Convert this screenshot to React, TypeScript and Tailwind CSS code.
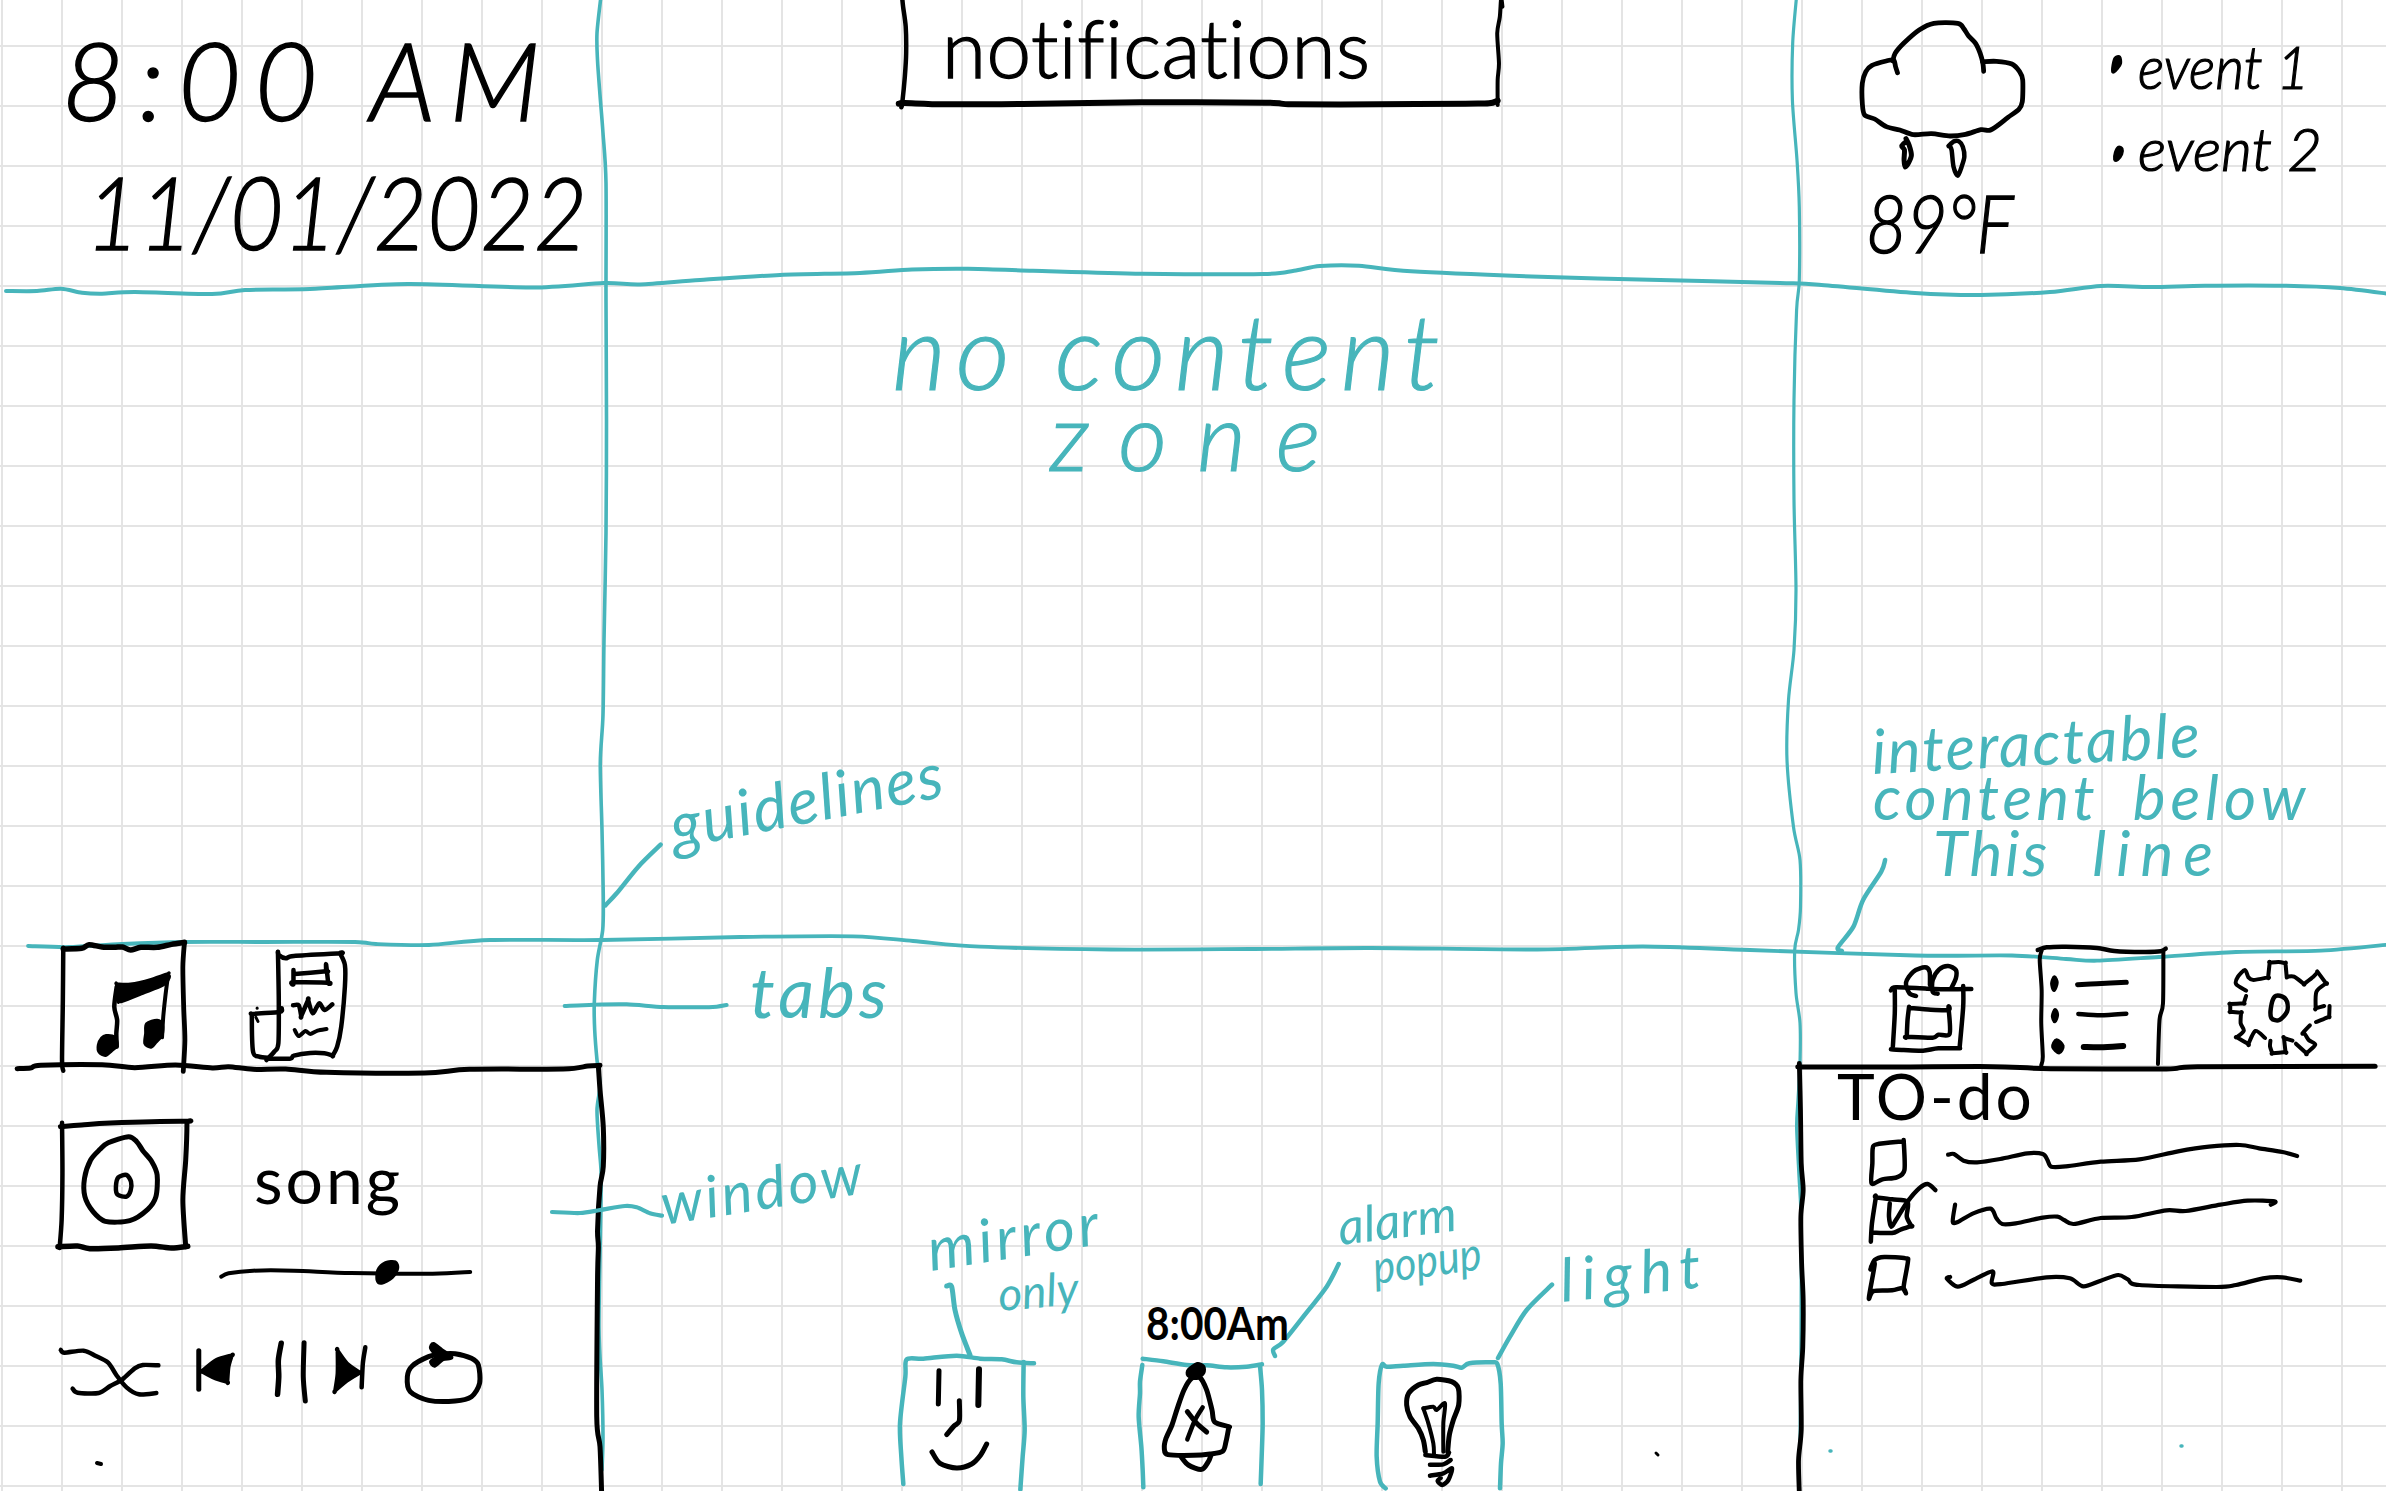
import React from "react";

type Sheet = { x: number; y: number; kx: number; ky: number };

// Each drawing sheet has its own origin and its own units per pixel.
const SHEETS: Record<string, Sheet> = {
  page: { x: 0, y: 0, kx: 1, ky: 1 },
  clock: { x: 0, y: 0, kx: 2.45, ky: 3 },
  notice: { x: 860, y: 0, kx: 2.3059, ky: 3 },
  weather: { x: 1780, y: 0, kx: 2.5875, ky: 3 },
  music: { x: 0, y: 900, kx: 2.45, ky: 3 },
  player: { x: 0, y: 1230, kx: 2.45, ky: 3 },
  notes: { x: 560, y: 730, kx: 3, ky: 3 },
  hint: { x: 1780, y: 700, kx: 2.5875, ky: 3 },
  todo: { x: 1780, y: 930, kx: 2.5875, ky: 3 },
  mirror: { x: 880, y: 1190, kx: 3, ky: 3 },
  light: { x: 1280, y: 1190, kx: 3, ky: 3 },
  win: { x: 540, y: 1130, kx: 3, ky: 3 },
};

const TEAL = "#47b5bb";

// Turns a list of points into a smooth pen stroke (Catmull-Rom to Bezier).
function curve(points: string, closed = false) {
  const p = points.trim().split(/\s+/).map((s) => s.split(",").map(Number));
  const n = p.length;
  const at = (i: number) => (closed ? p[(i + n) % n] : p[Math.max(0, Math.min(n - 1, i))]);
  let d = `M${p[0][0]} ${p[0][1]}`;
  for (let i = 0; i < (closed ? n : n - 1); i++) {
    const [a, b, c, e] = [at(i - 1), at(i), at(i + 1), at(i + 2)];
    const k = 7;
    d += `C${b[0] + (c[0] - a[0]) / k} ${b[1] + (c[1] - a[1]) / k} ${c[0] - (e[0] - b[0]) / k} ${c[1] - (e[1] - b[1]) / k} ${c[0]} ${c[1]}`;
  }
  return d + (closed ? "Z" : "");
}

function Pen({ p, w = 4.5, c = "#000", closed, fill }: { p: string; w?: number; c?: string; closed?: boolean; fill?: boolean }) {
  return (
    <path
      d={curve(p, closed)}
      fill={fill ? c : "none"}
      stroke={c}
      strokeWidth={w}
      strokeLinecap="round"
      strokeLinejoin="round"
      vectorEffect="non-scaling-stroke"
    />
  );
}

function Doodle({ sheet, x, y, w, h, className = "", children }: { sheet: string; x: number; y: number; w: number; h: number; className?: string; children: React.ReactNode }) {
  const s = SHEETS[sheet];
  return (
    <svg
      width={w}
      height={h}
      viewBox={`${(x - s.x) * s.kx} ${(y - s.y) * s.ky} ${w * s.kx} ${h * s.ky}`}
      preserveAspectRatio="none"
      className={`block shrink-0 overflow-visible ${className}`}
    >
      {children}
    </svg>
  );
}

function Layer({ sheet, children }: { sheet: string; children: React.ReactNode }) {
  const s = SHEETS[sheet];
  return <g transform={`translate(${s.x} ${s.y}) scale(${1 / s.kx} ${1 / s.ky})`}>{children}</g>;
}

function Clock() {
  return (
    <section className="flex flex-col pt-[25px] [-webkit-text-stroke:1.4px]">
      <time className="ml-[62px] h-[108px] text-[108px] leading-none font-light tracking-[14px] whitespace-nowrap italic">8:00 AM</time>
      <time className="mt-[28px] ml-[86px] h-[100px] origin-left scale-x-[.92] text-[100px] leading-none font-light whitespace-nowrap italic">11/01/2022</time>
    </section>
  );
}

function Notifications() {
  return (
    <section className="flex justify-center pr-[2px]">
      <div className="relative h-[106px] w-[596px]">
        <Doodle sheet="notice" x={902} y={0} w={596} h={106} className="absolute">
          <Pen p="102,-5 104,20 110,80 111,160 108,230 102,310 100,322" />
          <Pen w={6} p="94,311 108,309 200,313 380,312 650,307 940,308 1000,313 1200,313 1400,311 1455,310 1475,302" />
          <Pen w={4} p="1486,20 1483,-5 1480,50 1474,100 1478,190 1475,240 1475,315" />
        </Doodle>
        <h2 className="ml-[42px] pt-[7px] text-[80px] leading-none font-light tracking-[0.5px] whitespace-nowrap [-webkit-text-stroke:1.4px]">notifications</h2>
      </div>
    </section>
  );
}

function Weather() {
  return (
    <section className="flex">
      <div className="ml-[62px] flex w-[162px] flex-col">
        <Doodle sheet="weather" x={1860} y={20} w={165} h={160} className="mt-[20px]">
          <Pen w={4.8} p="304,218 299,200 294,180 275,183 238,196 222,215 213,250 213,310 219,345 245,357 275,380 310,390 345,404 392,401 440,408 480,403 520,389 542,391 565,375 590,352 618,328 627,305 628,240 620,215 600,192 560,184 524,185" />
          <Pen w={4.8} p="292,183 298,160 320,130 360,90 398,70 460,70 475,85 488,108 506,130 518,160 525,190 527,214" />
          <Pen w={5} p="326,416 334,435 340,465 333,488 324,501 321,480 322,450 315,438 326,425" />
          <Pen w={4.5} p="436,438 450,424 463,424 473,440 477,470 470,500 460,527 449,500 444,450 438,436" />
        </Doodle>
        <p className="mt-[2px] ml-[6px] origin-left scale-x-[.88] text-[80px] leading-none font-light whitespace-nowrap italic [-webkit-text-stroke:1.4px]">89°F</p>
      </div>
      <ul className="mt-[36px] ml-[104px] flex flex-col gap-[22px]">
        <li className="flex h-[60px] items-start gap-[14px]">
          <Doodle sheet="weather" x={2106} y={50} w={18} h={30} className="mt-[14px] -ml-[20px]">
            <Pen fill closed w={4} p="868,175 878,172 880,190 872,205 862,215 863,195" />
          </Doodle>
          <span className="origin-left scale-x-[.93] text-[60px] leading-none font-light whitespace-nowrap italic [-webkit-text-stroke:1.2px]">event 1</span>
        </li>
        <li className="flex h-[60px] items-start gap-[14px]">
          <Doodle sheet="weather" x={2106} y={138} w={18} h={30} className="mt-[20px] -ml-[20px]">
            <Pen fill closed w={4} p="876,443 884,447 883,462 873,478 867,478 869,458" />
          </Doodle>
          <span className="text-[60px] leading-none font-light whitespace-nowrap italic [-webkit-text-stroke:1.2px]">event 2</span>
        </li>
      </ul>
    </section>
  );
}

function NoContentZone() {
  return (
    <section className="flex flex-col pt-[12px] font-light text-[#47b5bb] italic [-webkit-text-stroke:1.2px]">
      <p className="ml-[292px] text-[105px] leading-none tracking-[9.5px] whitespace-nowrap">no content</p>
      <p className="mt-[-15px] ml-[450px] text-[95px] leading-none tracking-[30px] whitespace-nowrap">zone</p>
    </section>
  );
}

function InteractableHint() {
  return (
    <section className="flex flex-col pt-[434px] pl-[75px] text-[#47b5bb] italic">
      <p className="origin-bottom-left -rotate-3 text-[62px] leading-none tracking-[2px] whitespace-nowrap">interactable</p>
      <p className="mt-[-16px] flex gap-[34px] text-[62px] leading-none whitespace-nowrap">
        <span className="tracking-[4px]">content</span>
        <span className="tracking-[5px]">below</span>
      </p>
      <p className="mt-[-6px] ml-[60px] flex gap-[42px] text-[62px] leading-none whitespace-nowrap">
        <span className="tracking-[3px]">This</span>
        <span className="tracking-[10px]">line</span>
      </p>
    </section>
  );
}

function MusicPanel() {
  return (
    <section className="flex flex-col">
      <nav className="flex h-[122px] pl-[58px]">
        <Doodle sheet="music" x={58} y={946} w={132} h={122}>
          <Pen w={4.5} p="155,512 152,480 154,300 155,143" />
          <Pen w={5.5} p="155,147 200,145 218,134 250,141 280,142 300,141 320,150 345,142 385,142 420,133 452,127" />
          <Pen w={4.8} p="452,127 448,200 450,320 453,420 449,514" />
          <Pen fill closed w={3} p="286,252 286,252 320,252 370,238 412,220 412,220 415,232 400,255 350,280 300,304 290,304 290,304" />
          <Pen w={4.5} p="286,260 280,320 287,360 285,400 286,440" />
          <Pen w={4} p="411,232 405,290 400,350 397,412" />
          <Pen fill closed w={4} p="260,408 280,412 286,435 272,452 258,465 244,456 242,435 250,415" />
          <Pen fill closed w={4} p="360,372 385,362 397,375 396,405 382,425 370,440 356,430 358,400" />
        </Doodle>
        <Doodle sheet="music" x={246} y={946} w={104} h={122} className="ml-[56px]">
          <Pen p="681,155 683,165 700,175 720,168 833,160 833,160 845,195 845,260 836,380 826,440 815,467 815,467 795,460 760,459 720,467 710,476 655,476" />
          <Pen p="681,157 683,300 682,430 672,455 653,480" />
          <Pen p="690,325 685,336 620,342 617,350 620,455 635,470 660,474" />
          <Pen p="630,324 630,325" w={3} />
          <Pen p="627,352 632,364" w={3} />
          <Pen w={4.5} p="719,210 719,252 719,246 804,248 804,248 799,193 799,214 799,214 722,222" />
          <Pen w={4.5} p="718,316 732,316 738,348 738,348 755,300 755,300 766,340 782,310 795,330 814,313" />
          <Pen w={4} p="722,390 732,408 748,393 760,402 778,392 800,387" />
        </Doodle>
      </nav>
      <div className="flex pl-[56px]">
        <Doodle sheet="music" x={56} y={1116} w={134} h={136} className="mt-[48px]">
          <Pen w={5} p="148,680 200,675 270,669 455,664 458,672 455,780 448,900 455,1040" />
          <Pen w={4.5} p="152,668 153,820 151,960 146,1044" />
          <Pen w={5.5} p="142,1040 190,1038 220,1046 290,1044 370,1038 420,1044 460,1039" />
          <Pen w={5} closed p="265,728 315,710 335,725 350,752 372,785 385,825 382,890 362,928 318,962 258,964 228,935 208,890 207,835 222,780 245,748" />
          <Pen w={4.5} closed p="290,832 310,825 321,845 320,872 310,890 288,884 284,860" />
        </Doodle>
        <h3 className="mt-[78px] ml-[64px] text-[66px] leading-none tracking-[3px]">song</h3>
      </div>
      <Doodle sheet="player" x={218} y={1258} w={256} h={30} className="mt-[6px] ml-[218px]">
        <Pen w={4} p="542,140 560,130 620,122 720,122 860,129 1060,131 1152,126" />
        <Pen fill closed w={4} p="945,99 968,97 973,115 960,142 935,158 925,150 927,120" />
      </Doodle>
      <div className="mt-[45px] flex pl-[58px]">
        <Doodle sheet="player" x={58} y={1333} w={104} h={76}>
          <Pen w={4.5} p="149,360 158,368 205,362 235,378 265,398 285,435 310,472 340,493 383,489" />
          <Pen w={4.5} p="178,476 190,488 242,489 270,468 300,448 330,415 350,405 388,406" />
        </Doodle>
        <Doodle sheet="player" x={194} y={1333} w={42} h={76} className="ml-[32px]">
          <Pen w={5} p="487,362 487,478" />
          <Pen fill closed w={4} p="494,424 494,424 530,390 568,376 568,376 560,410 557,456 557,456 525,444" />
        </Doodle>
        <Doodle sheet="player" x={270} y={1333} w={42} h={76} className="ml-[34px]">
          <Pen w={5.5} p="689,340 682,390 683,440 680,493" />
          <Pen w={5} p="745,338 743,440 748,513" />
        </Doodle>
        <Doodle sheet="player" x={330} y={1333} w={42} h={76} className="ml-[18px]">
          <Pen fill closed w={4} p="827,362 827,362 850,400 882,428 882,428 850,452 821,482 821,482 827,430" />
          <Pen w={4.5} p="895,352 889,400 886,472" />
        </Doodle>
        <Doodle sheet="player" x={402} y={1333} w={84} h={76} className="ml-[30px]">
          <Pen w={5} closed p="1050,380 1010,408 998,440 1005,485 1050,511 1115,513 1155,500 1175,460 1172,405 1155,385 1115,371 1080,372" />
          <Pen fill closed w={4} p="1062,342 1082,360 1106,382 1085,388 1065,407 1056,395 1070,380 1056,355" />
        </Doodle>
      </div>
    </section>
  );
}

function DockTiles() {
  return (
    <section className="flex items-end pl-[298px]">
      <Doodle sheet="mirror" x={898} y={1352} w={138} h={139}>
        <Pen c={TEAL} p="70,882 64,800 60,700 76,560 80,508 130,506 230,497 300,506 365,508 410,517 462,520" />
        <Pen c={TEAL} p="431,516 430,620 434,720 428,800 421,898" />
        <Pen w={5} p="177,542 175,642" />
        <Pen w={6} p="297,538 295,645" />
        <Pen w={5} p="238,632 238,692 222,708 200,734" />
        <Pen w={5} p="156,786 180,820 230,834 275,822 302,795 320,762" />
      </Doodle>
      <div className="ml-[98px] flex w-[134px] flex-col">
        <p className="ml-[12px] h-[46px] w-[140px] origin-left scale-x-[.88] text-[46px] leading-none font-bold whitespace-nowrap">8:00Am</p>
        <Doodle sheet="mirror" x={1134} y={1352} w={134} h={139} className="mt-[6px]">
          <Pen c={TEAL} p="788,506 850,514 920,525 980,526 1040,532 1100,530 1146,523" />
          <Pen c={TEAL} p="787,525 780,575 780,610 776,680 784,770 788,840 790,892" />
          <Pen c={TEAL} p="1140,528 1146,600 1148,700 1145,800 1142,882" />
          <Pen fill closed w={4} p="952,522 970,530 970,548 950,564 925,556 926,540" />
          <Pen w={5} closed p="935,565 960,563 980,600 996,660 1004,696 1046,710 1046,714 1038,755 1028,784 990,792 940,796 864,794 853,775 858,745 876,705 892,655 912,600" />
          <Pen w={5} p="903,800 925,825 965,838 985,815 992,798" />
          <Pen w={5} p="922,665 950,700 980,726" />
          <Pen w={4.5} p="968,652 945,690 922,748" />
        </Doodle>
      </div>
      <Doodle sheet="light" x={1372} y={1352} w={134} h={139} className="ml-[104px]">
        <Pen c={TEAL} p="317,895 300,875 290,800 293,700 296,580 306,524 320,530 370,527 460,522 520,527 545,533 568,520 635,517 652,522 662,580 665,700 668,760 663,820 660,895" />
        <Pen w={5} p="436,785 430,750 415,715 390,680 380,645 386,610 415,585 440,578 470,568 515,575 535,595 536,645 520,690 508,735 503,785" />
        <Pen w={4} p="430,655 445,700 460,760 462,795" />
        <Pen w={4} p="430,655 460,650 470,660 495,640 490,700 490,785" />
        <Pen w={4.5} p="436,795 495,800 507,788" />
        <Pen w={4.5} p="450,824 490,823 512,810" />
        <Pen w={4.5} p="450,857 490,850 516,835 505,870 487,885 473,873 482,864" />
      </Doodle>
    </section>
  );
}

const TASKS = [
  {
    id: "first",
    box: ["320,630 322,720 302,742 265,748 237,760 239,700 240,655 250,643 320,634"],
    line: "435,674 450,672 475,692 510,697 570,687 640,670 680,672 692,690 702,710 740,709 830,695 930,688 1030,664 1110,650 1190,645 1240,655 1300,666 1338,678",
  },
  {
    id: "second",
    box: ["235,935 238,880 248,802 248,802 290,808 330,815 328,860 340,888 340,888 310,900 290,909 240,908", "284,820 282,860 288,890 300,870 330,815 360,775 382,762 402,780"],
    line: "453,824 447,875 460,876 500,850 545,836 560,865 575,882 610,880 680,863 718,860 735,870 760,882 830,864 910,861 1000,841 1050,843 1140,824 1210,812 1280,814 1270,824",
  },
  {
    id: "third",
    box: ["234,1018 245,990 270,981 325,985 331,995 320,1070 326,1090 318,1074 290,1081 242,1083 230,1104 245,1003 236,1010"],
    line: "440,1041 432,1046 460,1070 500,1050 550,1024 548,1060 575,1062 690,1042 750,1045 785,1069 830,1052 875,1035 900,1048 930,1065 1130,1071 1180,1065 1250,1045 1300,1042 1346,1052",
  },
];

function TodoPanel() {
  return (
    <section className="flex flex-col">
      <nav className="flex h-[122px] pl-[90px]">
        <Doodle sheet="todo" x={1888} y={946} w={86} h={122}>
          <Pen p="352,198 335,190 326,158 345,125 375,112 387,125 388,165" />
          <Pen p="408,191 395,185 395,150 412,118 435,108 455,120 455,145 443,175" />
          <Pen p="287,181 300,172 380,176 440,178 495,177" />
          <Pen p="297,180 297,250 292,350" />
          <Pen p="474,168 474,230 465,350" />
          <Pen p="287,358 320,360 370,362 410,355 466,355" />
          <Pen w={4.5} p="334,230 330,270 328,320 328,320 395,323 410,314 439,311 436,232 436,240 390,239 336,234" />
        </Doodle>
        <Doodle sheet="todo" x={2036} y={946} w={132} h={122} className="ml-[62px]">
          <Pen w={4.5} p="667,60 690,52 740,50 820,54 865,63 940,66 985,64 998,56" />
          <Pen w={4} p="677,62 672,90 677,180 676,280 680,380 676,406" />
          <Pen w={4} p="992,66 991,220 982,270 978,402" />
          <Pen fill closed w={4} p="710,142 716,158 709,180 704,160" />
          <Pen fill closed w={4} p="712,240 717,255 711,274 706,258" />
          <Pen fill closed w={5} p="716,332 730,348 722,366 708,350" />
          <Pen w={5} p="770,164 820,161 896,157" />
          <Pen w={4.5} p="772,252 830,256 896,251" />
          <Pen w={6} p="786,351 830,352 888,348" />
        </Doodle>
        <Doodle sheet="todo" x={2228} y={960} w={104} h={96} className="mt-[14px] ml-[60px]">
          <Pen w={4} p="1311,140 1311,140 1308,100 1308,100 1290,96 1267,98 1267,98 1263,142 1263,142 1225,150 1212,142 1203,120 1185,140 1180,162 1206,182" />
          <Pen w={4} p="1206,198 1200,220 1200,220 1165,222 1165,222 1165,245 1165,245 1193,248 1193,248 1192,280 1200,302 1182,322 1182,322 1212,342 1212,342 1230,303 1255,324" />
          <Pen w={4} p="1269,332 1268,350 1274,370 1274,370 1308,366 1308,366 1304,324 1304,324 1326,332" />
          <Pen w={4} p="1335,341 1362,370 1362,370 1385,344 1368,330 1358,312 1352,310 1371,286" />
          <Pen w={4} p="1387,276 1405,268 1421,260 1421,260 1422,228" />
          <Pen w={4} p="1408,228 1386,235 1386,235 1388,185 1413,160 1413,160 1390,124" />
          <Pen w={4} p="1390,128 1380,140 1356,162 1356,162 1330,140 1313,140" />
          <Pen w={4.5} closed p="1280,200 1300,200 1312,215 1312,245 1292,270 1272,265 1270,235" />
        </Doodle>
      </nav>
      <h3 className="mt-[-4px] ml-[39px] text-[64px] leading-none tracking-[3px] whitespace-nowrap">TO-do</h3>
      <ul className="mt-[4px] flex flex-col pl-[67px]">
        {TASKS.map((t, i) => (
          <li key={t.id} className="flex h-[58px] gap-[38px]">
            <Doodle sheet="todo" x={1865} y={1132 + i * 58} w={42} h={58}>
              {t.box.map((b) => (
                <Pen key={b} p={b} />
              ))}
            </Doodle>
            <Doodle sheet="todo" x={1945} y={1132 + i * 58} w={360} h={58}>
              <Pen w={4.2} p={t.line} />
            </Doodle>
          </li>
        ))}
      </ul>
    </section>
  );
}

// Pen strokes that run across the whole board: guide lines, frames, leaders.
function Strokes() {
  return (
    <svg className="pointer-events-none absolute inset-0 -z-10" width="2386" height="1491" viewBox="0 0 2386 1491">
      <Pen c={TEAL} w={3.6} p="601,-4 597,33 597.5,60 600,95 603,133 606,183 606,300 606.5,420 606,533 604,640 603,715 600.3,763 602,830 603.3,897 602.7,930 597.3,960 594.3,1003 594.7,1030 597,1060 600,1085 597,1110 599,1145 601,1170 601,1200 599,1327 602,1390 603,1437 602,1470" />
      <Pen c={TEAL} w={3.2} p="1796.6,-4 1792.7,43 1792.4,100 1797,160 1799.3,207 1799.3,280 1796.6,310 1794,400 1794,500 1796,590 1794,650 1788.5,700 1787,760 1793.5,827 1800,860 1800.5,907 1798.5,930 1794.7,950 1796,993 1800,1023 1800,1063 1798,1100 1796.6,1127 1799,1177 1801,1220 1801,1340 1800,1440" />
      <Pen c={TEAL} w={4} p="6,291 37,291 61,288.7 82,292.7 102,293.7 135,292 212,294 245,290 310,289 408,284 531,287.5 604,283 640,284.5 700,280 780,275 860,273 912,269.5 968,268.7 1033,270.7 1142,273.7 1263,274 1294,270.7 1320,266 1359,265.7 1411,271.3 1540,276.7 1660,280 1780,283 1819,284.7 1915,293 1981,295 2050,292 2101,286 2151,287 2205,285.7 2282,285.7 2340,288 2390,294" />
      <Pen c={TEAL} w={3.8} p="28,946 69,947 122,944 184,942 265,942 355,942 376,944 429,945 490,940 602,940 740,937 853,936.3 913,941 980,946.7 1111,949.5 1250,949 1370,948 1537,949.5 1643,946.5 1750,950 1915,955.5 2012,955.5 2066,959 2097,960.7 2159,957 2236,952 2321,950.7 2390,944.5" />
      <Layer sheet="music">
        <Pen w={5} p="42,506 75,504 100,496 250,494 330,503 430,495 520,504 560,500 620,508 700,507 800,517 1040,519 1150,508 1380,507 1440,498 1470,496" />
        <Pen w={5} p="1466,497 1470,570 1478,680 1478,800 1470,860 1464,990 1466,1040 1464,1140 1462,1550 1470,1640 1474,1780" />
      </Layer>
      <Layer sheet="todo">
        <Pen w={5} p="46,411 300,411 550,410 700,416 1000,417 1080,410 1540,409" />
        <Pen w={4.8} p="50,400 53,540 55,700 60,780 54,860 56,1000 60,1110 59,1250 54,1350 55,1500 48,1590 50,1690" />
      </Layer>
      <Layer sheet="notes">
        <Pen c={TEAL} w={4.5} p="136,526 170,490 235,410 302,344" />
        <Pen c={TEAL} w={4} p="14,828 100,824 200,823 310,831 420,832 470,830 500,825" />
      </Layer>
      <Layer sheet="win">
        <Pen c={TEAL} w={4.2} p="36,246 120,249 180,240 255,228 290,232 330,250 366,257" />
      </Layer>
      <Layer sheet="hint">
        <Pen c={TEAL} w={4.5} p="272,480 262,515 215,600 190,680 150,742 160,753" />
      </Layer>
      <Layer sheet="mirror">
        <Pen c={TEAL} w={5} p="200,288 215,290 225,360 245,430 270,495" />
      </Layer>
      <Layer sheet="light">
        <Pen c={TEAL} w={4.5} p="176,222 140,290 70,380 10,455 -20,478 -15,498" />
        <Pen c={TEAL} w={4.5} p="816,284 740,360 690,440 654,504" />
      </Layer>
      <Pen w={4} p="97,1463 101,1464" />
      <Pen w={3} p="1656,1453 1658,1455" />
      <Pen c={TEAL} w={3.5} p="1830,1451 1831,1451" />
      <Pen c={TEAL} w={3.5} p="2181,1446 2182,1446" />
    </svg>
  );
}

function Callouts() {
  return (
    <div className="text-[#47b5bb] italic">
      <p className="absolute top-[793px] left-[676px] origin-bottom-left -rotate-[11deg] text-[64px] leading-none tracking-[1.5px] whitespace-nowrap">guidelines</p>
      <p className="absolute top-[956px] left-[750px] text-[70px] leading-none tracking-[4px] whitespace-nowrap">tabs</p>
      <p className="absolute top-[1174px] left-[665px] origin-bottom-left -rotate-[9deg] text-[58px] leading-none tracking-[3px] whitespace-nowrap">window</p>
      <p className="absolute top-[1218px] left-[932px] origin-bottom-left -rotate-[9deg] text-[60px] leading-none tracking-[4px] whitespace-nowrap">mirror</p>
      <p className="absolute top-[1271px] left-[1000px] origin-bottom-left -rotate-[5deg] text-[46px] leading-none whitespace-nowrap">only</p>
      <p className="absolute top-[1201px] left-[1341px] origin-bottom-left -rotate-[7deg] text-[50px] leading-none whitespace-nowrap">alarm</p>
      <p className="absolute top-[1244px] left-[1376px] origin-bottom-left scale-x-[.9] -rotate-[8deg] text-[46px] leading-none whitespace-nowrap">popup</p>
      <p className="absolute top-[1249px] left-[1563px] origin-bottom-left -rotate-[6deg] text-[60px] leading-none tracking-[8px] whitespace-nowrap">light</p>
    </div>
  );
}

export default function App() {
  return (
    <main className="relative isolate grid h-[1491px] w-[2386px] grid-cols-[600px_1198px_588px] grid-rows-[285px_661px_545px] overflow-hidden bg-white bg-[linear-gradient(to_right,#e4e4e4_2px,transparent_2px),linear-gradient(to_bottom,#e4e4e4_2px,transparent_2px)] bg-[size:60px_60px] bg-[position:1px_0px,0px_45px] font-[Lato,sans-serif] text-black">
      <Clock />
      <Notifications />
      <Weather />
      <div />
      <NoContentZone />
      <InteractableHint />
      <MusicPanel />
      <DockTiles />
      <TodoPanel />
      <Strokes />
      <Callouts />
    </main>
  );
}
